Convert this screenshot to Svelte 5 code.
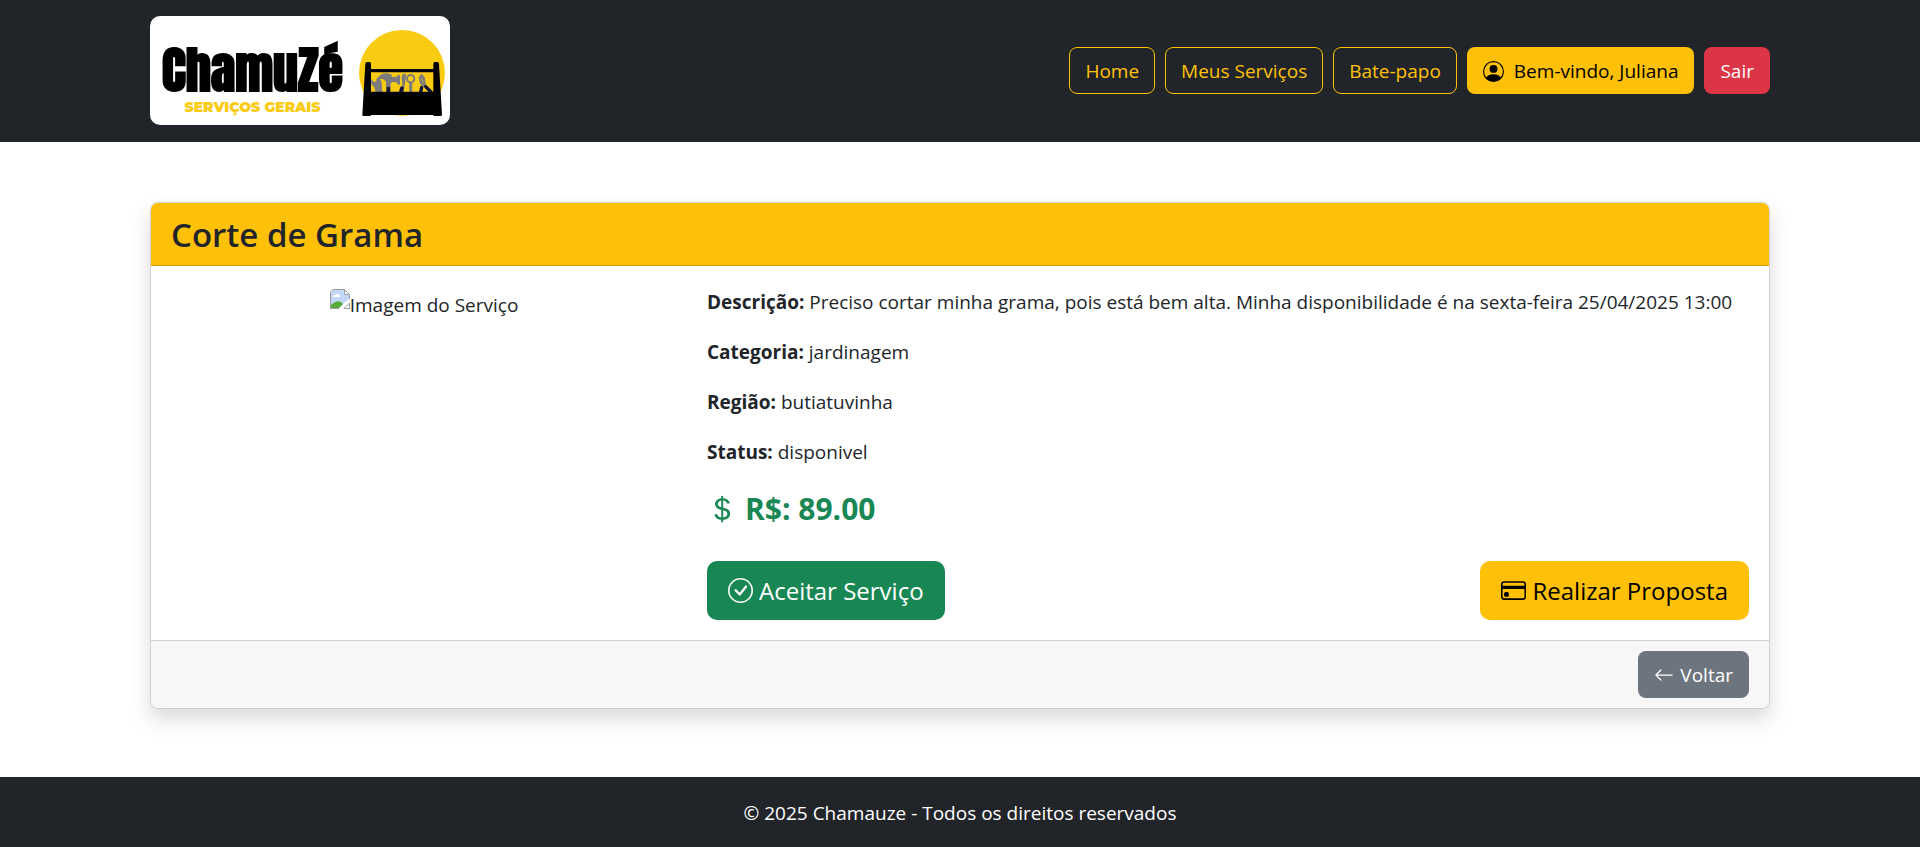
<script>
  const links = ['Home', 'Meus Serviços', 'Bate-papo'];
  const details = [
    ['Descrição', 'Preciso cortar minha grama, pois está bem alta. Minha disponibilidade é na sexta-feira 25/04/2025 13:00'],
    ['Categoria', 'jardinagem'],
    ['Região', 'butiatuvinha'],
    ['Status', 'disponivel']
  ];
</script>

<div class="page">
  <header class="topbar">
    <div class="container bar">
      <a class="logo" href="#home">
        <span class="brand">
          <span class="name">ChamuZé</span>
          <span class="tagline">SERVIÇOS GERAIS</span>
        </span>
        <svg class="toolbox" viewBox="651 84 270 270" aria-hidden="true">
          <circle cx="786" cy="219" r="129" fill="#facb13" />
          <g fill="#7c7c7e">
            <path d="M694 238l7 8 8-2 1-9c9 0 16 7 15 18l2 24h-20l-4-16c-7-3-12-12-9-23z" />
            <path d="M710 240c4-12 16-21 30-20l14 3 2 8 15-1 1-5 8 1v28l-8-1-2-6-14-1-4 5v14h-14v-20l-8-7c-8-3-13 0-20 5z" />
            <path d="M789 221h8l1 8-5 34-6-1-2-30z" />
            <path d="M836 231l9-10 9 11 4 23-7 5-11-9z" />
          </g>
          <g fill="none" stroke="#7c7c7e">
            <circle cx="812" cy="236" r="11" stroke-width="6" />
            <path d="M812 249v30" stroke-width="9" />
          </g>
          <path d="M843 233l8 18" stroke="#b9a24c" stroke-width="3" />
          <g fill="none" stroke="#10123f" stroke-linecap="round">
            <path d="M745 266v12M786 265l-3 12" stroke-width="12" />
            <path d="M845 262l-3 14M857 260l16 16" stroke-width="10" />
          </g>
          <path d="M676 192q0-6 6-6h6q5 0 5 6v15h187v-15q0-6 5-6h7q5 0 5 6l9 152q0 4-4 4h-20l-3-3H694l-3 3h-20q-4 0-4-4l9-152zM693 217v58h187v-58z" fill="#000" fill-rule="evenodd" />
        </svg>
      </a>
      <nav>
        {#each links as link}
          <a class="btn outline" href="#{link}">{link}</a>
        {/each}
        <a class="btn warning user" href="#perfil">
          <svg width="21" height="21" viewBox="0 0 16 16" fill="currentColor" aria-hidden="true">
            <path d="M11 6a3 3 0 1 1-6 0 3 3 0 0 1 6 0" />
            <path fill-rule="evenodd" d="M0 8a8 8 0 1 1 16 0A8 8 0 0 1 0 8m8-7a7 7 0 0 0-5.468 11.37C3.242 11.226 4.805 10 8 10s4.757 1.225 5.468 2.37A7 7 0 0 0 8 1" />
          </svg>
          Bem-vindo, Juliana
        </a>
        <a class="btn danger" href="#sair">Sair</a>
      </nav>
    </div>
  </header>

  <main class="container">
    <article class="card">
      <div class="card-header"><h1>Corte de Grama</h1></div>
      <div class="card-body">
        <div class="picture">
          <svg width="20" height="20" viewBox="0 0 20 20" aria-hidden="true">
            <path d="M1 19V5q0-4 4-4h9l5 5v4L9 19z" fill="#c5d7f6" />
            <path d="M3 8q0-2 2-2 1-2 3-1 2 0 2 3z" fill="#fff" />
            <path d="M1 19v-3q8-7 12-1l-4 4z" fill="#56ac38" />
            <path d="M14 1v5h5z" fill="#fff" />
            <path d="M.5 19.500V5Q.5.5 5 .5h9.500l5 5V10M14.500.5v5h5M.5 19.500H9M14 19.500h5.500V14z" fill="none" stroke="#9b9b9b" />
          </svg><span>Imagem do Serviço</span>
        </div>
        <div class="info">
          {#each details as [label, value]}
            <p><strong>{label}:</strong> {value}</p>
          {/each}
          <h2>
            <svg width="30" height="30" viewBox="0 0 16 16" fill="currentColor" aria-hidden="true">
              <path d="M4 10.781c.148 1.667 1.513 2.850 3.591 3.003V15h1.043v-1.216c2.270-.179 3.678-1.438 3.678-3.300 0-1.590-.947-2.510-2.956-3.028l-.722-.187V3.467c1.122.110 1.879.714 2.070 1.616h1.470c-.166-1.600-1.540-2.748-3.540-2.875V1H7.591v1.233c-1.939.230-3.270 1.472-3.270 3.156 0 1.454.966 2.483 2.661 2.917l.610.162v4.031c-1.149-.170-1.940-.800-2.131-1.718zm3.391-3.836c-1.043-.263-1.600-.825-1.600-1.616 0-.944.704-1.641 1.800-1.828v3.495l-.200-.050zm1.591 1.872c1.287.323 1.852.859 1.852 1.769 0 1.097-.826 1.828-2.200 1.939V8.730z" />
            </svg>
            R$: 89.00
          </h2>
          <div class="actions">
            <button class="btn large success" type="button">
              <svg width="25" height="25" viewBox="0 0 16 16" fill="currentColor" aria-hidden="true">
                <path d="M8 15A7 7 0 1 1 8 1a7 7 0 0 1 0 14m0 1A8 8 0 1 0 8 0a8 8 0 0 0 0 16" />
                <path d="M10.970 4.970l-.020.022-3.473 4.425-2.093-2.094a.75.75 0 0 0-1.060 1.060L6.970 11.030a.75.75 0 0 0 1.079-.020l3.992-4.990a.75.75 0 0 0-1.071-1.050" />
              </svg>
              Aceitar Serviço
            </button>
            <button class="btn large warning" type="button">
              <svg width="25" height="25" viewBox="0 0 16 16" fill="currentColor" aria-hidden="true">
                <path d="M0 4a2 2 0 0 1 2-2h12a2 2 0 0 1 2 2v8a2 2 0 0 1-2 2H2a2 2 0 0 1-2-2zm2-1a1 1 0 0 0-1 1v1h14V4a1 1 0 0 0-1-1zm13 4H1v5a1 1 0 0 0 1 1h12a1 1 0 0 0 1-1z" />
                <path d="M2 10a1 1 0 0 1 1-1h1a1 1 0 0 1 1 1v1a1 1 0 0 1-1 1H3a1 1 0 0 1-1-1z" />
              </svg>
              Realizar Proposta
            </button>
          </div>
        </div>
      </div>
      <div class="card-footer">
        <a class="btn secondary" href="#voltar">
          <svg width="20" height="20" viewBox="0 0 16 16" fill="currentColor" aria-hidden="true">
            <path d="M15 8a.5.5 0 0 0-.5-.5H2.707l3.147-3.146a.5.5 0 1 0-.708-.708l-4 4a.5.5 0 0 0 0 .708l4 4a.5.5 0 0 0 .708-.708L2.707 8.500H14.500A.5.5 0 0 0 15 8" />
          </svg>
          Voltar
        </a>
      </div>
    </article>
  </main>

  <footer class="bottom">© 2025 Chamauze - Todos os direitos reservados</footer>
</div>

<style>
  :global(body) {
    margin: 0;
    background: #fff;
  }

  .page {
    display: flex;
    flex-direction: column;
    min-height: 100vh;
    color: #212529;
    font: 19px/30px "Segoe UI", "Open Sans", sans-serif;
  }

  .page, .page * {
    box-sizing: border-box;
  }

  .container {
    width: 100%;
    max-width: 1650px;
    margin: 0 auto;
    padding: 0 15px;
  }

  .topbar {
    padding: 16px 0 17px;
    background: #212529;
  }

  .bar {
    display: flex;
    align-items: center;
    justify-content: space-between;
  }

  .logo {
    display: flex;
    align-items: center;
    justify-content: space-between;
    width: 300px;
    height: 109px;
    padding: 4px 3px 0 12px;
    border-radius: 10px;
    background: #fff;
    text-decoration: none;
  }

  .brand {
    display: flex;
    flex-direction: column;
    align-items: center;
    padding-top: 12px;
  }

  .name {
    color: #000;
    font: 400 50px/56px Anton, "Liberation Sans Narrow", "Open Sans", sans-serif;
    -webkit-text-stroke: 2px #000;
  }

  .tagline {
    color: #facb13;
    font: 900 14px/18px Montserrat, Inter, sans-serif;
  }

  .toolbox {
    flex: none;
    width: 90px;
    height: 90px;
  }

  nav {
    display: flex;
    gap: 10px;
  }

  .btn {
    display: inline-flex;
    align-items: center;
    gap: 6px;
    padding: 8px 15px 7px;
    border: 1px solid transparent;
    border-radius: 8px;
    font: inherit;
    line-height: 30px;
    text-decoration: none;
    white-space: nowrap;
    cursor: pointer;
  }

  .user {
    gap: 10px;
  }

  .outline {
    border-color: #ffc107;
    color: #ffc107;
  }

  .warning {
    background: #ffc107;
    color: #000;
  }

  .danger {
    background: #dc3545;
    color: #fff;
  }

  .success {
    background: #198754;
    color: #fff;
  }

  .secondary {
    background: #6c757d;
    color: #fff;
  }

  .large {
    padding: 10px 20px;
    border-radius: 10px;
    font-size: 24px;
    line-height: 37px;
  }

  main {
    flex: 1;
  }

  .card {
    margin: 60px 0;
    border: 1px solid #d0d1d2;
    border-radius: 8px;
    background: #fff;
    box-shadow: 0 10px 20px rgba(0, 0, 0, 0.15);
  }

  .card-header {
    padding: 10px 20px 8px;
    border-bottom: 1px solid #d2a20c;
    border-radius: 7px 7px 0 0;
    background: #ffc107;
  }

  h1 {
    margin: 0;
    font-size: 33px;
    font-weight: 600;
    line-height: 44px;
  }

  .card-body {
    display: grid;
    grid-template-columns: 1fr 2fr;
    padding: 21px 5px 20px;
  }

  .picture {
    display: flex;
    justify-content: center;
    align-items: flex-start;
    padding: 2px 15px;
    line-height: 32px;
  }

  .info {
    padding: 0 15px;
  }

  p {
    margin: 0 0 20px;
  }

  h2 {
    display: flex;
    align-items: center;
    gap: 8px;
    margin: 24px 0 34px;
    color: #198754;
    font-size: 30px;
    font-weight: 700;
    line-height: 36px;
  }

  .actions {
    display: flex;
    flex-wrap: wrap;
    gap: 20px;
    justify-content: space-between;
  }

  .card-footer {
    display: flex;
    justify-content: flex-end;
    padding: 10px 20px;
    border-top: 1px solid #d0d1d2;
    border-radius: 0 0 7px 7px;
    background: #f7f7f7;
  }

  .bottom {
    padding: 21px 20px 19px;
    background: #212529;
    color: #fff;
    text-align: center;
  }
</style>
